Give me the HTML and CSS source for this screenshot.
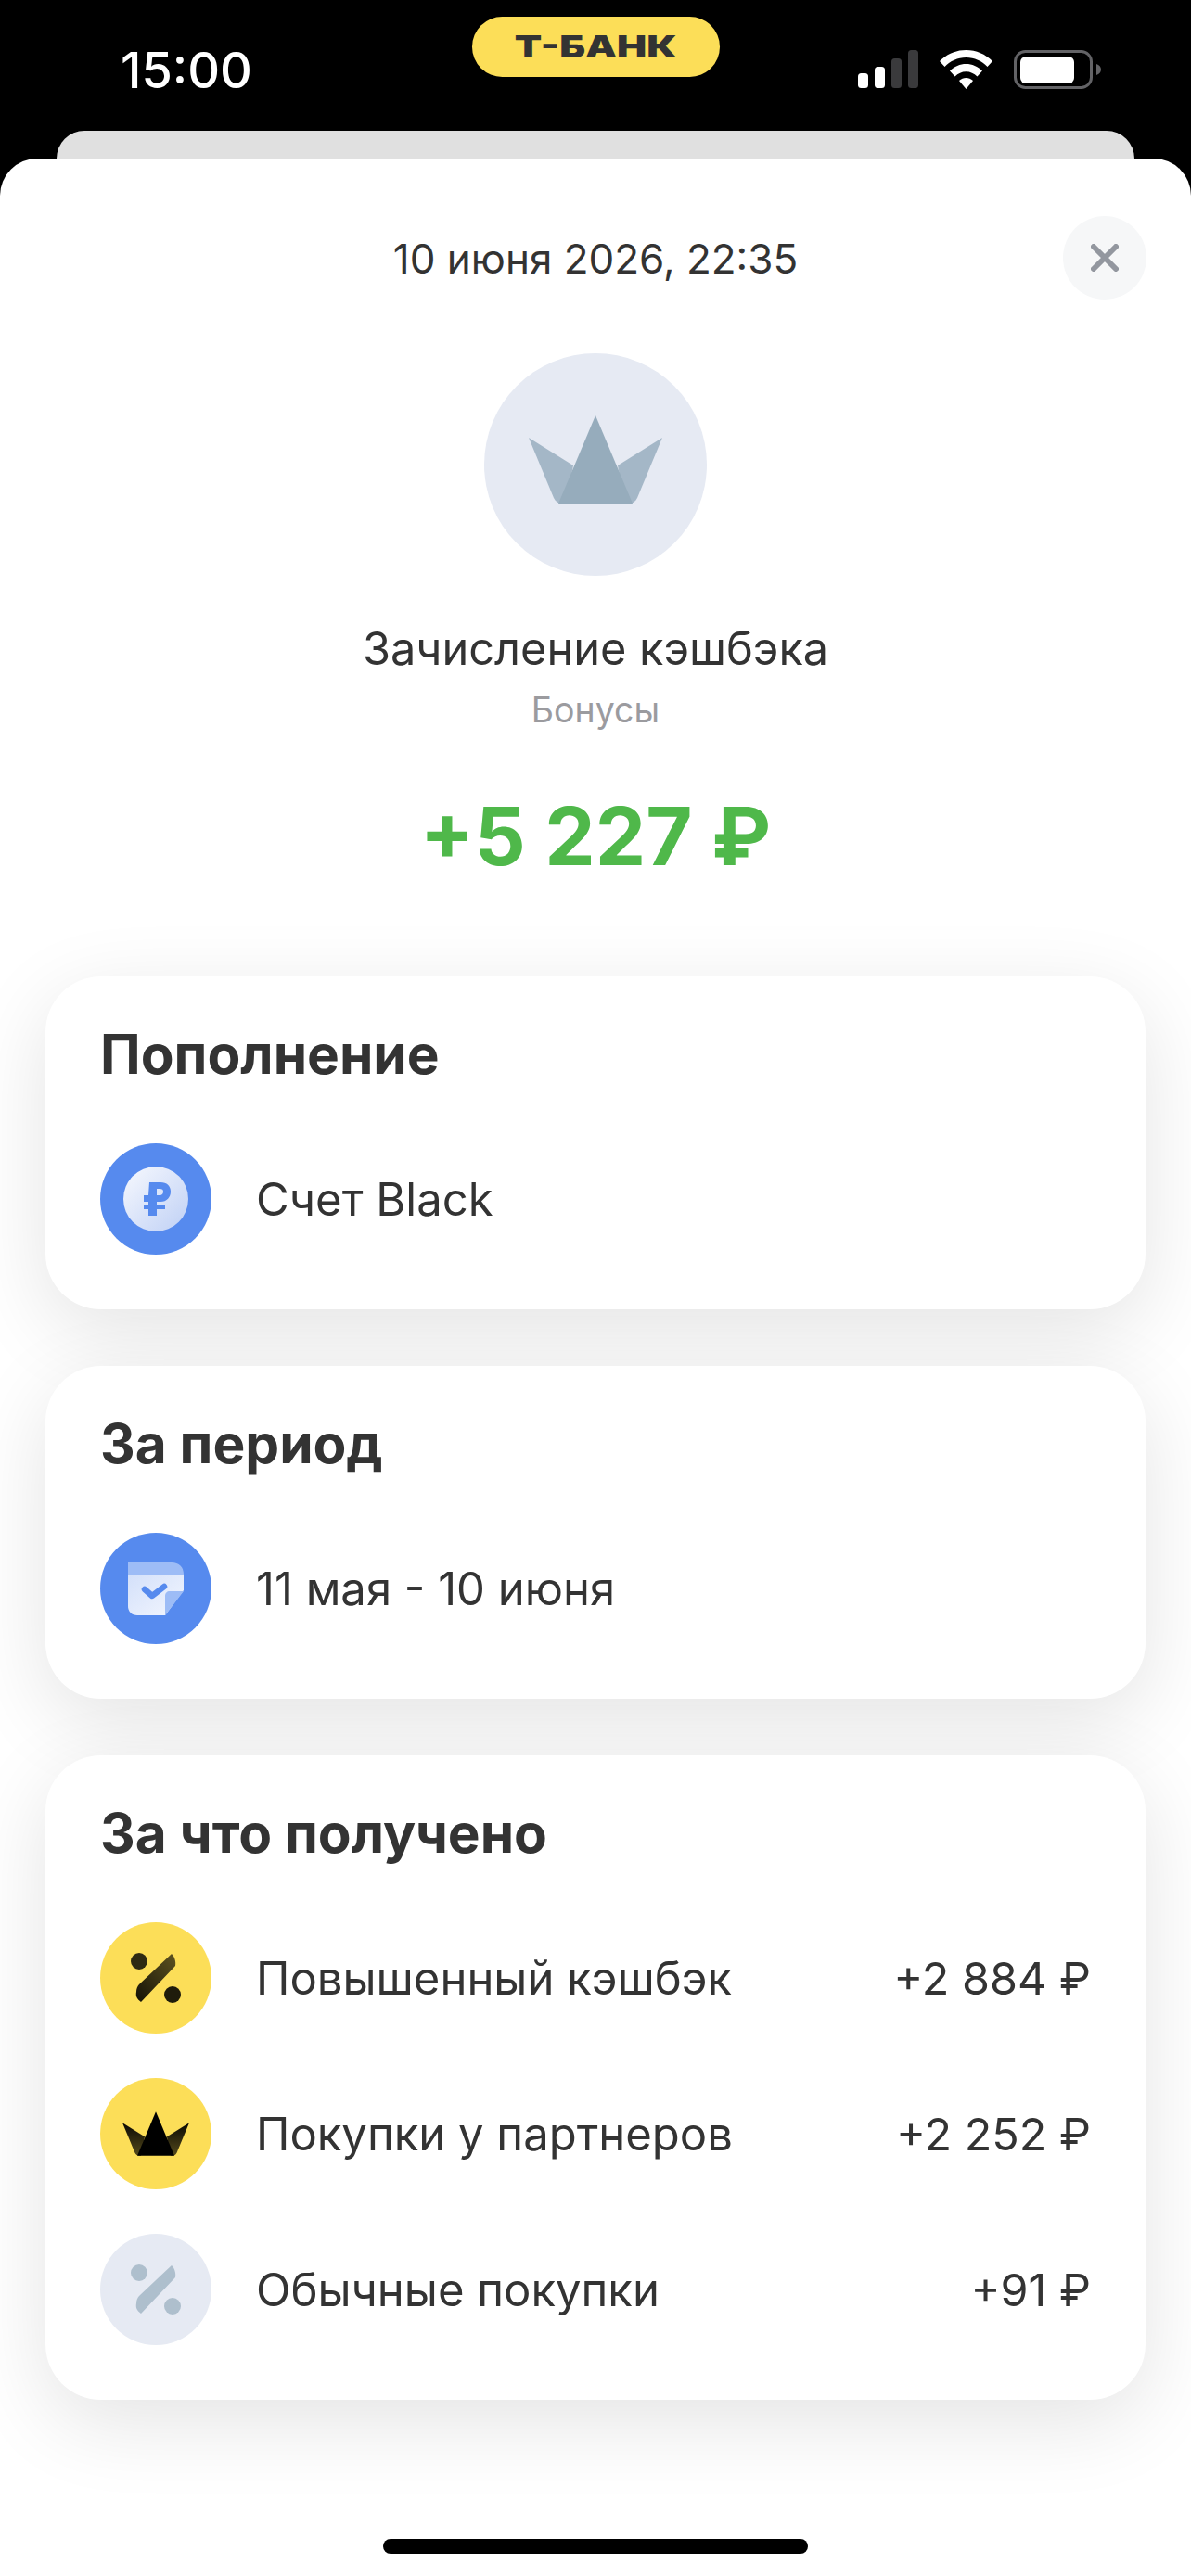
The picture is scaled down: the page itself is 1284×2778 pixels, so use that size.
FILE: index.html
```html
<!DOCTYPE html>
<html lang="ru">
<head>
  <meta charset="UTF-8">
  <meta name="viewport" content="width=device-width, initial-scale=1.0">
  <title>Зачисление кэшбэка</title>
  <link rel="stylesheet" href="styles.css">
</head>
<body>
  <!-- Статус-бар -->
  <header class="status-bar">
    <span class="status-time">15:00</span>
    <span class="status-pill"><span class="status-pill-text">Т-БАНК</span></span>
    <div class="status-icons">
      <svg width="65" height="41" viewBox="0 0 65 41">
        <rect x="0" y="25" width="11" height="16" rx="3.5" fill="#fff"/>
        <rect x="18" y="18" width="11" height="23" rx="3.5" fill="#fff"/>
        <rect x="36" y="9" width="11" height="32" rx="3.5" fill="#3a3a3c"/>
        <rect x="54" y="0" width="11" height="41" rx="3.5" fill="#3a3a3c"/>
      </svg>
      <svg class="status-wifi" width="57" height="42" viewBox="0 0 57 42">
        <path d="M28.500 0C39.500 0 49.300 4.400 57 12L51.500 18C45.500 11.800 37.500 8 28.500 8S11.500 11.800 5.500 18L0 12C7.700 4.400 17.500 0 28.500 0Z" fill="#fff"/>
        <path d="M28.500 15C35 15 41 17.600 46 22.500L40.500 28.500C37.200 25.200 33 23.200 28.500 23.200S19.800 25.200 16.500 28.500L11 22.500C16 17.600 22 15 28.500 15Z" fill="#fff"/>
        <path d="M28.500 30C31.200 30 33.800 31 36 33L28.500 42L21 33C23.200 31 25.800 30 28.500 30Z" fill="#fff"/>
      </svg>
      <svg width="94" height="42" viewBox="0 0 94 42">
        <rect x="1.500" y="1.500" width="82" height="39" rx="11" fill="none" stroke="#636366" stroke-width="3"/>
        <rect x="7" y="7" width="58" height="29" rx="6" fill="#fff"/>
        <path d="M89 15C92 16 94 18 94 21S92 26 89 27Z" fill="#636366"/>
      </svg>
    </div>
  </header>

  <div class="sheet-behind"></div>

  <main class="sheet">
    <div class="sheet-top">
      <p class="date">10 июня 2026, 22:35</p>
      <button class="close-btn" aria-label="Закрыть">
        <svg width="30" height="30" viewBox="0 0 30 30">
          <path d="M3 3L27 27M27 3L3 27" stroke="#93979f" stroke-width="6" stroke-linecap="round"/>
        </svg>
      </button>
    </div>

    <div class="hero-icon">
      <svg width="144" height="95" viewBox="0 0 144 95">
        <path d="M0 24L48 54L40 95H36C32 95 29 93 27 89Z" fill="#a4b7c7"/>
        <path d="M144 24L96 54L104 95H108C112 95 115 93 117 89Z" fill="#a4b7c7"/>
        <path d="M72 0L112 95H32Z" fill="#96acbc"/>
      </svg>
    </div>

    <h1 class="title">Зачисление кэшбэка</h1>
    <p class="subtitle">Бонусы</p>
    <p class="amount">+5 227 ₽</p>

    <section class="card">
      <h2 class="card-title">Пополнение</h2>
      <div class="row">
        <div class="round-icon round-blue">
          <svg width="70" height="70" viewBox="0 0 70 70">
            <defs>
              <linearGradient id="coin" x1="0" y1="0" x2="1" y2="1">
                <stop offset="0" stop-color="#f7f9fe"/>
                <stop offset="1" stop-color="#bfd0f5"/>
              </linearGradient>
            </defs>
            <circle cx="35" cy="35" r="35" fill="url(#coin)"/>
            <path d="M28 17H40C47 17 51 21 51 27S47 38 40 38H36V41H45V46H36V53H27V46H22V41H27V38H22V31H27ZM36 24V31H39C42 31 43 29 43 27S42 24 39 24Z" fill="#568aee" fill-rule="evenodd"/>
          </svg>
        </div>
        <span class="row-label">Счет Black</span>
      </div>
    </section>

    <section class="card">
      <h2 class="card-title">За период</h2>
      <div class="row">
        <div class="round-icon round-blue">
          <svg width="60" height="57" viewBox="0 0 60 57">
            <defs>
              <linearGradient id="paper" x1="0" y1="0" x2="1" y2="1">
                <stop offset="0" stop-color="#d3e0fa"/>
                <stop offset="1" stop-color="#f3f6fe"/>
              </linearGradient>
            </defs>
            <path d="M0 12H60V30L40 57H10C4 57 0 53 0 47Z" fill="url(#paper)"/>
            <path d="M0 0H47C55 0 60 5 60 13H0Z" fill="#9dbcf6"/>
            <path d="M40 57V36C40 33 42 31 45 31H60Z" fill="#9dbcf6"/>
            <path d="M18 29L26 36L39 26" fill="none" stroke="#568aee" stroke-width="6.500" stroke-linecap="round" stroke-linejoin="round"/>
          </svg>
        </div>
        <span class="row-label">11 мая - 10 июня</span>
      </div>
    </section>

    <section class="card">
      <h2 class="card-title">За что получено</h2>
      <div class="row">
        <div class="round-icon round-yellow">
          <svg width="54" height="54" viewBox="0 0 54 54">
            <defs>
              <linearGradient id="percent-dark" x1="0" y1="1" x2="1" y2="0">
                <stop offset="0" stop-color="#141206"/>
                <stop offset="1" stop-color="#5e5320"/>
              </linearGradient>
            </defs>
            <circle cx="9" cy="9" r="9" fill="#2e2a12"/>
            <circle cx="45" cy="45" r="9" fill="#1f1c0b"/>
            <path d="M44 1C47 4 49 9 48 14L11 53C7 50 5 47 6 42C6 39 7 36 9 34Z" fill="url(#percent-dark)"/>
          </svg>
        </div>
        <span class="row-label">Повышенный кэшбэк</span>
        <span class="row-value">+2 884 ₽</span>
      </div>
      <div class="row">
        <div class="round-icon round-yellow">
          <svg width="72" height="48" viewBox="0 0 144 95">
            <defs>
              <linearGradient id="wing" x1="0" y1="0" x2="0" y2="1">
                <stop offset="0" stop-color="#0a0903"/>
                <stop offset="1" stop-color="#554a1c"/>
              </linearGradient>
            </defs>
            <path d="M0 24L48 54L40 95H36C32 95 29 93 27 89Z" fill="url(#wing)"/>
            <path d="M144 24L96 54L104 95H108C112 95 115 93 117 89Z" fill="url(#wing)"/>
            <path d="M72 0L112 95H32Z" fill="#000"/>
          </svg>
        </div>
        <span class="row-label">Покупки у партнеров</span>
        <span class="row-value">+2 252 ₽</span>
      </div>
      <div class="row">
        <div class="round-icon round-gray">
          <svg width="54" height="54" viewBox="0 0 54 54">
            <circle cx="9" cy="9" r="9" fill="#aebfcd"/>
            <circle cx="45" cy="45" r="9" fill="#aebfcd"/>
            <path d="M44 1C47 4 49 9 48 14L11 53C7 50 5 47 6 42C6 39 7 36 9 34Z" fill="#aebfcd"/>
          </svg>
        </div>
        <span class="row-label">Обычные покупки</span>
        <span class="row-value">+91 ₽</span>
      </div>
    </section>

    <div class="home-indicator"></div>
  </main>
</body>
</html>
```

FILE: styles.css
```css
/* Общие стили */
* {
  box-sizing: border-box;
}

html, body {
  margin: 0;
  height: 2778px;
  overflow: hidden;
}

body {
  display: flex;
  flex-direction: column;
  background: #000;
  color: #333;
  font-family: Inter, "Noto Sans", sans-serif;
}

h1, h2, p {
  margin: 0;
  font-weight: normal;
}

/* Статус-бар */
.status-bar {
  display: grid;
  grid-template-columns: 1fr 267px 1fr;
  height: 141px;
  padding: 18px 97px 0;
}

.status-time {
  margin: 31px 0 0 33px;
  color: #fff;
  font-size: 54px;
  font-weight: 500;
  line-height: 54px;
}

.status-pill {
  height: 65px;
  border-radius: 33px;
  background: #fcde58;
  line-height: 65px;
  text-align: center;
}

.status-pill-text {
  display: inline-block;
  color: #333;
  font-size: 33px;
  font-weight: 900;
  transform: scaleX(1.3);
}

.status-icons {
  display: flex;
  justify-content: flex-end;
  align-items: flex-start;
  gap: 23px;
  padding-top: 36px;
}

.sheet-behind {
  height: 30px;
  margin: 0 61px;
  border-radius: 30px 30px 0 0;
  background: #e0e0e0;
}

/* Основной лист */
.sheet {
  flex: 1;
  display: flex;
  flex-direction: column;
  align-items: center;
  padding: 0 49px 24px;
  border-radius: 40px 40px 0 0;
  background: #fff;
}

.sheet-top {
  position: relative;
  width: 100%;
  padding-top: 78px;
}

.date {
  font-size: 44px;
  line-height: 60px;
  text-align: center;
}

.close-btn {
  position: absolute;
  top: 62px;
  right: -1px;
  width: 90px;
  height: 90px;
  display: flex;
  justify-content: center;
  align-items: center;
  padding: 0;
  border: none;
  border-radius: 50%;
  background: #f6f7f8;
}

.hero-icon {
  width: 240px;
  height: 240px;
  margin-top: 72px;
  display: flex;
  justify-content: center;
  align-items: center;
  border-radius: 50%;
  background: #e6eaf3;
}

.hero-icon svg {
  margin-top: -11px;
}

.title {
  margin-top: 48px;
  font-size: 48.700px;
  line-height: 62px;
}

.subtitle {
  margin-top: 13px;
  color: #9b9b9f;
  font-size: 37.500px;
  line-height: 44px;
}

.amount {
  margin-top: 61px;
  color: #4fb84a;
  font-size: 86.500px;
  font-weight: 700;
  line-height: 106px;
}

/* Карточки */
.card {
  width: 100%;
  margin-top: 61px;
  padding: 50px 59px 59px 59px;
  border-radius: 60px;
  background: #fff;
  box-shadow: 0 24px 90px rgba(0, 0, 0, 0.11);
}

.amount + .card {
  margin-top: 98px;
}

.card-title {
  color: #333;
  font-size: 58.500px;
  font-weight: 700;
  line-height: 68px;
}

.row {
  display: flex;
  align-items: center;
  margin-top: 48px;
}

.card-title + .row {
  margin-top: 62px;
}

.round-icon {
  flex: none;
  width: 120px;
  height: 120px;
  display: flex;
  justify-content: center;
  align-items: center;
  border-radius: 50%;
}

.round-blue {
  background: #568aee;
}

.round-yellow {
  background: #fcde58;
}

.round-gray {
  background: #e6eaf3;
}

.row-label {
  flex: 1;
  margin-left: 48px;
  font-size: 49px;
}

.row-value {
  font-size: 48.500px;
}

.home-indicator {
  flex: none;
  width: 458px;
  height: 16px;
  margin-top: auto;
  border-radius: 8px;
  background: #000;
}
```
